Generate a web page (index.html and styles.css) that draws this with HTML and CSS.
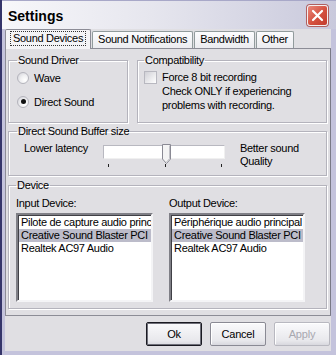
FILE: index.html
```html
<!DOCTYPE html>
<html lang="en">

<head>
    <meta charset="UTF-8">
    <title>Settings</title>
    <link rel="stylesheet" href="styles.css">
</head>

<body>
    <div class="window">
        <div class="titlebar">
            <span class="title">Settings</span>
            <span class="close">
                <svg width="13" height="13" viewBox="0 0 13 13">
                    <path d="M2 2 L11 11 M11 2 L2 11" stroke="#fff" stroke-width="2.2" stroke-linecap="round"/>
                </svg>
            </span>
        </div>
        <div class="client">
            <div class="tabs">
                <div class="tab active"><span>Sound Devices</span></div>
                <div class="tab">Sound Notifications</div>
                <div class="tab">Bandwidth</div>
                <div class="tab">Other</div>
            </div>
            <div class="panel">
                <div class="row">
                    <fieldset class="group driver">
                        <legend>Sound Driver</legend>
                        <div class="radio"><span class="dot"></span>Wave</div>
                        <div class="radio checked"><span class="dot"></span>Direct Sound</div>
                    </fieldset>
                    <fieldset class="group compat">
                        <legend>Compatibility</legend>
                        <div class="check">
                            <span class="box"></span>
                            <div>Force 8 bit recording<br>Check ONLY if experiencing<br>problems with recording.</div>
                        </div>
                    </fieldset>
                </div>
                <fieldset class="group buffer">
                    <legend>Direct Sound Buffer size</legend>
                    <div class="buffer-row">
                        <div class="lo">Lower latency</div>
                        <div class="slider">
                            <div class="track">
                                <svg class="thumb" width="9" height="20" viewBox="0 0 9 20">
                                    <path d="M0.5 0.5 H8.5 V15 L4.5 19.5 L0.5 15 Z" fill="#f4f4f4" stroke="#8a8a94"/>
                                    <path d="M7.5 1.5 V14.6 L4.5 18" fill="none" stroke="#c2c2c8"/>
                                </svg>
                            </div>
                            <div class="ticks"><i></i><i></i><i></i></div>
                        </div>
                        <div class="hi">Better sound<br>Quality</div>
                    </div>
                </fieldset>
                <fieldset class="group device">
                    <legend>Device</legend>
                    <div class="lists">
                        <div>
                            <div class="label">Input Device:</div>
                            <ul class="list">
                                <li>Pilote de capture audio principal</li>
                                <li class="sel">Creative Sound Blaster PCI</li>
                                <li>Realtek AC97 Audio</li>
                            </ul>
                        </div>
                        <div>
                            <div class="label">Output Device:</div>
                            <ul class="list">
                                <li>Périphérique audio principal</li>
                                <li class="sel">Creative Sound Blaster PCI</li>
                                <li>Realtek AC97 Audio</li>
                            </ul>
                        </div>
                    </div>
                </fieldset>
            </div>
            <div class="buttons">
                <button class="default">Ok</button>
                <button>Cancel</button>
                <button disabled>Apply</button>
            </div>
        </div>
    </div>
</body>

</html>
```

FILE: styles.css
```css
* {
    margin: 0;
    padding: 0;
    box-sizing: border-box;
}

body {
    background: #c4c4dc;
    font-family: 'Liberation Sans', Arial, sans-serif;
    font-size: 11px;
    letter-spacing: -0.3px;
    color: #000;
}

.window {
    width: 336px;
    height: 355px;
    display: flex;
    flex-direction: column;
    background: #c4c3dc;
    border-left: 2px solid #35356a;
}

.titlebar {
    height: 29px;
    flex: none;
    display: flex;
    align-items: center;
    justify-content: space-between;
    padding: 0 8px 0 6px;
    background: linear-gradient(to right, #f7f7fa 0%, #e6e6ee 45%, #c9c9dc 100%);
    border-top: 1px solid #a8a8c8;
}

.title {
    font-weight: bold;
    font-size: 14px;
    letter-spacing: 0;
    margin-top: 1px;
}

.close {
    width: 21px;
    height: 21px;
    display: flex;
    align-items: center;
    justify-content: center;
    border: 1px solid #f4f0f0;
    border-radius: 3px;
    background: linear-gradient(135deg, #e9897c 0%, #d4503f 55%, #c23c2e 100%);
    box-shadow: 0 0 0 1px #b06060;
}

.client {
    flex: 1;
    display: flex;
    flex-direction: column;
    background: #e0dfe3;
    margin: 0 5px 4px 3px;
}

/* tabs */

.tabs {
    display: flex;
    align-items: flex-end;
    height: 19px;
    position: relative;
    z-index: 1;
}

.tab {
    height: 17px;
    line-height: 15px;
    padding: 0 5px;
    border: 1px solid #919b9c;
    border-bottom: none;
    border-radius: 2px 2px 0 0;
    background: linear-gradient(#fcfcfe, #ececf0);
    margin-right: 1px;
}

.tab.active {
    height: 20px;
    padding: 1px 5px 0 5px;
    margin-bottom: -1px;
    background: #f4f4f6;
    border-color: #8c8c96;
}

.tab.active span {
    display: inline-block;
    padding: 0 2px;
    line-height: 13px;
    outline: 1px dotted #333;
}

.panel {
    height: 268px;
    border: 1px solid #8c8c96;
    border-right-color: #7a7a86;
    background: #e0dfe3;
    padding: 5px 3px 0 2px;
    display: flex;
    flex-direction: column;
}

/* group boxes */

.group {
    border: 1px solid #b4b3bc;
    box-shadow: inset 1px 1px 0 #fff, 1px 1px 0 #fff;
}

.group legend {
    padding: 0 1px;
    line-height: 13px;
}

.row {
    display: flex;
    gap: 9px;
}

.driver {
    width: 120px;
    padding: 4px 8px 13px;
}

.radio {
    display: flex;
    align-items: center;
    height: 13px;
}

.radio + .radio {
    margin-top: 11px;
}

.dot {
    width: 12px;
    height: 12px;
    border-radius: 50%;
    margin-right: 5px;
    border: 1px solid #b4b4bc;
    background: radial-gradient(circle at 70% 70%, #ffffff 0%, #f0f0f2 45%, #cfcfd6 100%);
    display: flex;
    align-items: center;
    justify-content: center;
}

.checked .dot::after {
    content: "";
    width: 5px;
    height: 5px;
    border-radius: 50%;
    background: #111;
}

.compat {
    flex: 1;
    padding: 3px 6px 10px;
}

.check {
    display: flex;
    line-height: 14px;
}

.box {
    flex: none;
    width: 13px;
    height: 13px;
    margin: 1px 5px 0 0;
    border: 1px solid #b8b8c0;
    background: linear-gradient(135deg, #d0d0d6, #ffffff);
}

/* buffer slider */

.buffer {
    margin-top: 2px;
    padding: 4px 8px 7px;
}

.buffer-row {
    display: flex;
    align-items: flex-start;
    padding-left: 7px;
    line-height: 13px;
}

.lo {
    width: 79px;
}

.slider {
    width: 122px;
    margin-top: 3px;
}

.track {
    height: 14px;
    position: relative;
    background: #fff;
    border-top: 1px solid #b8b8c0;
    border-left: 1px solid #b8b8c0;
    border-bottom: 1px solid #f0f0f0;
    border-right: 1px solid #f0f0f0;
}

.thumb {
    position: absolute;
    left: 58px;
    top: -2px;
}

.ticks {
    display: flex;
    justify-content: space-between;
    padding: 5px 3px 0 5px;
}

.ticks i {
    width: 1px;
    height: 3px;
    background: #222;
}

.hi {
    margin-left: 15px;
}

/* devices */

.device {
    margin-top: 3px;
    padding: 5px 16px 6px 7px;
}

.lists {
    display: grid;
    grid-template-columns: 137px 136px;
    gap: 16px;
}

.label {
    line-height: 13px;
    margin-bottom: 3px;
}

.list {
    list-style: none;
    height: 89px;
    background: #fff;
    border: 2px solid;
    border-color: #7f7f86 #f4f4f6 #f4f4f6 #7f7f86;
    box-shadow: inset 1px 1px 0 #404046;
    padding: 1px 0 0 1px;
    overflow: hidden;
}

.list li {
    height: 13px;
    line-height: 13px;
    padding-left: 2px;
    white-space: nowrap;
    overflow: hidden;
}

.list li.sel {
    background: #bcbcca;
}

/* buttons */

.buttons {
    display: flex;
    justify-content: flex-end;
    gap: 8px;
    padding: 6px 1px 0 0;
}

button {
    width: 56px;
    height: 24px;
    font-family: inherit;
    font-size: 11px;
    letter-spacing: -0.2px;
    background: linear-gradient(#fafafc, #e8e8ec 80%, #d8d8de);
    border: 1px solid #8a8a94;
    border-radius: 2px;
    box-shadow: inset 1px 1px 0 #fff;
}

button.default {
    border: 1px solid #1a1a22;
    box-shadow: inset 0 0 0 1px #6e6e78;
}

button:disabled {
    color: #a8a8b0;
    border-color: #b8b8c0;
}
```
